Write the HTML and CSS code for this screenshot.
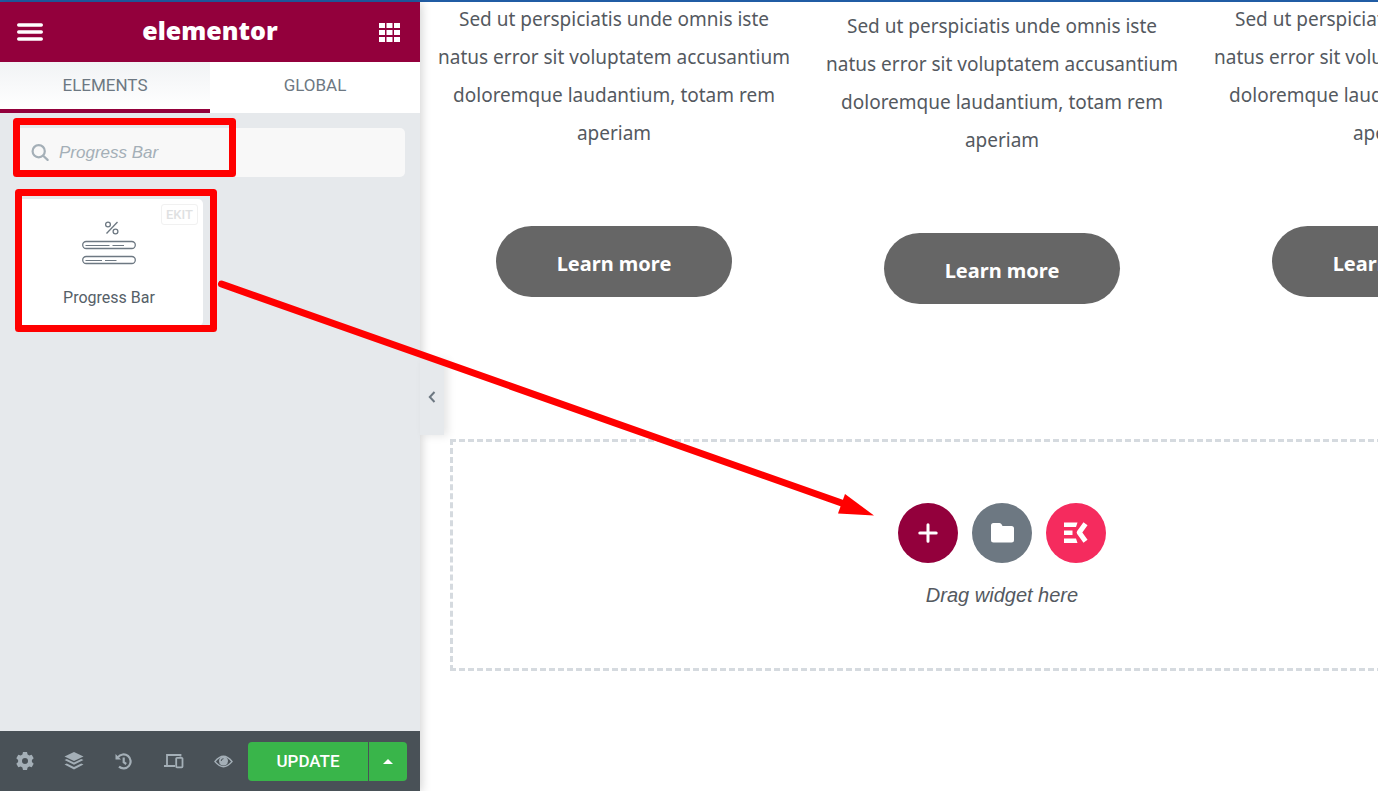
FILE: index.html
```html
<!DOCTYPE html>
<html lang="en">
<head>
<meta charset="utf-8">
<title>Elementor</title>
<meta name="viewport" content="width=device-width, initial-scale=1">
<link rel="stylesheet" href="styles.css">
</head>
<body>
<div class="editor">
  <aside class="panel">
    <header class="panel-header">
      <button class="header-button" aria-label="Menu">
        <svg width="26" height="18" viewBox="0 0 26 18"><path d="M1.700 2h22.600M1.700 9h22.600M1.700 16h22.600" stroke="#fff" stroke-width="3.400" stroke-linecap="round"/></svg>
      </button>
      <h1 class="logo">elementor</h1>
      <button class="header-button" aria-label="Widgets">
        <svg width="21" height="19" viewBox="0 0 21 19" fill="#fff"><path d="M0 0h6v5H0zM7.500 0h6v5h-6zM15 0h6v5h-6zM0 7h6v5H0zM7.500 7h6v5h-6zM15 7h6v5h-6zM0 14h6v5H0zM7.500 14h6v5h-6zM15 14h6v5h-6z"/></svg>
      </button>
    </header>
    <nav class="tabs">
      <button class="tab tab-active">ELEMENTS</button>
      <button class="tab">GLOBAL</button>
    </nav>
    <div class="panel-body">
      <label class="search">
        <svg width="18" height="18" viewBox="0 0 18 18" fill="none" stroke="#a4afb7" stroke-width="2.200"><circle cx="7.700" cy="7.200" r="6.100"/><path d="M12.200 11.700l4.400 4.200" stroke-linecap="round"/></svg>
        <input class="search-input" type="text" placeholder="Progress Bar" aria-label="Search widget">
      </label>
      <div class="widgets">
        <button class="widget">
          <span class="badge">EKIT</span>
          <svg class="widget-icon" width="54" height="44" viewBox="0 0 54 44" fill="none" stroke="#6d7882" stroke-width="1.300">
            <path d="M24.500 12.500L35.500 1"/><circle cx="26" cy="3.500" r="2.400"/><circle cx="33.500" cy="10.500" r="2.400"/>
            <rect x=".7" y="20.500" width="52.600" height="7" rx="3.500"/><rect x=".7" y="35.500" width="52.600" height="7" rx="3.500"/>
            <path d="M3.500 24.500H27.500M30.500 24.500H42M3.500 39.500H20M23 39.500H34.500" stroke-width="1"/>
          </svg>
          <span>Progress Bar</span>
        </button>
      </div>
    </div>
    <footer class="panel-footer">
      <div class="tools">
        <button class="tool" aria-label="Settings"><svg width="18" height="18" viewBox="0 0 18 18"><path fill="#a4afb7" fill-rule="evenodd" d="M7 0h4l.6 2.500 1.700 1L15.700 2.700l2 3.500-1.800 1.700v2.200l1.800 1.700-2 3.500-2.400-.8-1.700 1L11 18H7l-.6-2.500-1.700-1-2.400.8-2-3.500 1.800-1.700V7.900L.3 6.200l2-3.500 2.400.8 1.700-1zM9 6a3 3 0 100 6 3 3 0 000-6z"/></svg></button>
        <button class="tool" aria-label="Navigator"><svg width="20" height="18" viewBox="0 0 20 18" fill="#a4afb7"><path d="M10 0l9.500 4.500L10 9 .5 4.500z"/><path d="M.5 8l2.300-1L10 10.500 17.200 7l2.300 1L10 12.700zM.5 12.500l2.300-1L10 15l7.200-3.500 2.300 1L10 17.500z"/></svg></button>
        <button class="tool" aria-label="History"><svg width="17" height="17" viewBox="0 0 17 17" fill="none" stroke="#a4afb7" stroke-width="2.200"><path d="M3 4.200A7 7 0 1 1 4 13.700"/><path d="M8.700 4.500v4.700l2.500 1.800"/><path d="M.5 1v5.500H6z" fill="#a4afb7" stroke="none"/></svg></button>
        <button class="tool" aria-label="Responsive mode"><svg width="20" height="16" viewBox="0 0 20 16" fill="none" stroke="#a4afb7" stroke-width="1.800"><path d="M3 12V2h13.500v1.500M0 13h11"/><rect x="12.200" y="4.800" width="6.300" height="9.600" rx=".8"/></svg></button>
        <button class="tool" aria-label="Preview changes"><svg width="19" height="13" viewBox="0 0 19 13"><path d="M1 6.500Q9.500-4 18 6.500 9.500 17 1 6.500z" fill="none" stroke="#a4afb7" stroke-width="1.400"/><circle cx="9.500" cy="6" r="4.500" fill="#a4afb7"/><path d="M7.200 6a2.300 2.300 0 012.300-2.300" fill="none" stroke="#495157"/></svg></button>
      </div>
      <div class="publish">
        <button class="update">UPDATE</button>
        <button class="update-more" aria-label="Save options"><svg width="10" height="5" viewBox="0 0 10 5"><path d="M0 5l5-5 5 5z" fill="#fff"/></svg></button>
      </div>
    </footer>
    <button class="collapse" aria-label="Hide panel"><svg width="8" height="12" viewBox="0 0 8 12"><path d="M6.500 1L1.800 6l4.700 5" fill="none" stroke="#6d7882" stroke-width="2"/></svg></button>
  </aside>
  <main class="preview">
    <div class="page">
      <div class="columns">
        <section class="column">
          <p>Sed ut perspiciatis unde omnis iste natus error sit voluptatem accusantium doloremque laudantium, totam rem aperiam</p>
          <a class="learn" href="#">Learn more</a>
        </section>
        <section class="column column-lower">
          <p>Sed ut perspiciatis unde omnis iste natus error sit voluptatem accusantium doloremque laudantium, totam rem aperiam</p>
          <a class="learn" href="#">Learn more</a>
        </section>
        <section class="column">
          <p>Sed ut perspiciatis unde omnis iste natus error sit voluptatem accusantium doloremque laudantium, totam rem aperiam</p>
          <a class="learn" href="#">Learn more</a>
        </section>
      </div>
      <div class="dropzone">
        <div class="add-buttons">
          <button class="round round-add" aria-label="Add new section"><svg width="20" height="20" viewBox="0 0 20 20"><path d="M10 1.800v16.400M1.800 10h16.400" stroke="#fff" stroke-width="3" stroke-linecap="round"/></svg></button>
          <button class="round round-folder" aria-label="Add template"><svg width="23" height="20" viewBox="0 0 23 20"><path fill="#fff" d="M2.500 0H8.500Q10 0 10.700 1.500L11.500 3H20.500Q23 3 23 5.500V17q0 2.500-2.500 2.500h-18Q0 19.500 0 17V2.500Q0 0 2.500 0z"/></svg></button>
          <button class="round round-kit" aria-label="ElementsKit library"><svg width="26" height="24" viewBox="0 0 26 24" fill="#fff"><path d="M1 1.500H14.500L13 6H1zM1 9.500h8.500v4.500H1zM1 17.500h12l1.500 4.500H1z"/><path d="M22.500 2.700L16.200 11.500l6.300 8.800" fill="none" stroke="#fff" stroke-width="5" stroke-linejoin="round"/></svg></button>
        </div>
        <p class="drop-hint">Drag widget here</p>
      </div>
    </div>
  </main>
</div>
<svg class="annotations" width="900" height="540" viewBox="0 0 900 540" fill="none" stroke="#f00" stroke-width="7" stroke-linejoin="round" stroke-linecap="round" aria-hidden="true">
  <rect x="16.500" y="121.500" width="216" height="52"/>
  <rect x="18.500" y="192.500" width="195" height="136"/>
  <path d="M221.500 284L843 503.500"/>
  <path d="M874 515.500l-36-2 7-19.500z" fill="#f00" stroke="none"/>
</svg>
</body>
</html>
```
FILE: styles.css
```css
* { box-sizing: border-box; }
body { margin: 0; height: 100vh; overflow: hidden; background: #fff; }
button { border: 0; padding: 0; margin: 0; background: none; font: inherit; color: inherit; cursor: pointer; }
svg { display: block; flex: none; }
p { margin: 0; }

.editor {
  display: flex;
  height: 100vh;
  border-top: 2px solid #205ca4;
  font-family: Roboto, sans-serif;
}

.panel {
  position: relative;
  z-index: 1;
  flex: none;
  width: 420px;
  display: flex;
  flex-direction: column;
  background: #e6e9ec;
  box-shadow: 1px 1px 10px rgba(0, 0, 0, 0.2);
}
.panel-header {
  display: flex;
  align-items: center;
  justify-content: space-between;
  height: 60px;
  padding: 0 16px;
  background: #93003c;
}
.header-button { display: flex; justify-content: center; width: 28px; }
.logo {
  margin: 0;
  padding-bottom: 4px;
  color: #fff;
  font: 800 25px/36px "Open Sans", sans-serif;
}

.tabs { display: flex; }
.tab {
  flex: 1;
  height: 51px;
  padding-bottom: 2px;
  border-bottom: 4px solid #fff;
  background: #fff;
  color: #6d7882;
  font-size: 17px;
}
.tab-active {
  border-color: #93003c;
  background: linear-gradient(#f1f3f5, #fff);
}

.panel-body { flex: 1; padding: 15px; }
.search {
  display: flex;
  align-items: center;
  gap: 10px;
  height: 49px;
  padding: 0 16px;
  border-radius: 5px;
  background: #f8f8f8;
}
.search-input {
  flex: 1;
  min-width: 0;
  padding: 0;
  border: 0;
  outline: 0;
  background: none;
  font: italic 17px "Liberation Sans", sans-serif;
}
.search-input::placeholder { color: #a4afb7; opacity: 1; }

.widgets {
  display: grid;
  grid-template-columns: 1fr 1fr;
  gap: 14px;
  margin-top: 22px;
}
.widget {
  position: relative;
  display: flex;
  flex-direction: column;
  align-items: center;
  gap: 22px;
  padding: 22px 0 17px;
  border-radius: 5px;
  background: #fff;
  color: #556068;
  font-size: 16px;
  line-height: 22px;
}
.badge {
  position: absolute;
  top: 5px;
  right: 5px;
  padding: 0 4px;
  border: 1px solid #f1f1f1;
  border-radius: 3px;
  color: #dfe1e2;
  font-weight: 500;
  font-size: 13px;
  line-height: 19px;
}

.panel-footer {
  display: flex;
  align-items: center;
  height: 60px;
  padding-right: 13px;
  background: #495157;
}
.tools { flex: 1; display: flex; }
.tool { flex: 1; display: flex; align-items: center; justify-content: center; }
.publish { display: flex; gap: 1px; width: 159px; height: 39px; color: #fff; }
.update {
  flex: 1;
  border-radius: 4px 0 0 4px;
  background: #39b54a;
  font-weight: 500;
  font-size: 17px;
}
.update-more {
  display: flex;
  align-items: center;
  justify-content: center;
  width: 38px;
  border-radius: 0 4px 4px 0;
  background: #39b54a;
}
.collapse {
  position: absolute;
  left: 100%;
  top: 357px;
  display: flex;
  align-items: center;
  justify-content: center;
  width: 24px;
  height: 76px;
  background: #e6e9ec;
  box-shadow: 4px 1px 8px rgba(0, 0, 0, 0.1);
}

.preview { flex: 1; min-width: 0; overflow: hidden; }
.page { min-width: 1164px; }
.columns {
  display: grid;
  grid-template-columns: repeat(3, 1fr);
  height: 439px;
  margin-top: -2px;
}
.column {
  display: flex;
  flex-direction: column;
  align-items: center;
  padding: 0 14px;
  color: #54595f;
  font: 19px/38px "Noto Sans", sans-serif;
  text-align: center;
}
.column-lower { padding-top: 7px; }
.learn {
  margin-top: 74px;
  padding: 20px 61px 15px;
  border-radius: 36px;
  background: #666;
  color: #fff;
  font-weight: 700;
  font-size: 20px;
  line-height: 36px;
  text-decoration: none;
}
.dropzone {
  display: flex;
  flex-direction: column;
  align-items: center;
  gap: 20px;
  margin: 0 30px;
  padding: 61px 0;
  border: 3px dashed #d5dadf;
}
.add-buttons { display: flex; gap: 14px; }
.round {
  display: flex;
  align-items: center;
  justify-content: center;
  width: 60px;
  height: 60px;
  border-radius: 50%;
}
.round-add { background: #93003c; }
.round-folder { background: #6d7882; }
.round-kit { background: #f52b5e; }
.drop-hint {
  color: #54595f;
  font: italic 20px/24px "Liberation Sans", sans-serif;
}

/* Callouts drawn over the editor */
.annotations { position: absolute; top: 0; left: 0; z-index: 2; pointer-events: none; }
```
